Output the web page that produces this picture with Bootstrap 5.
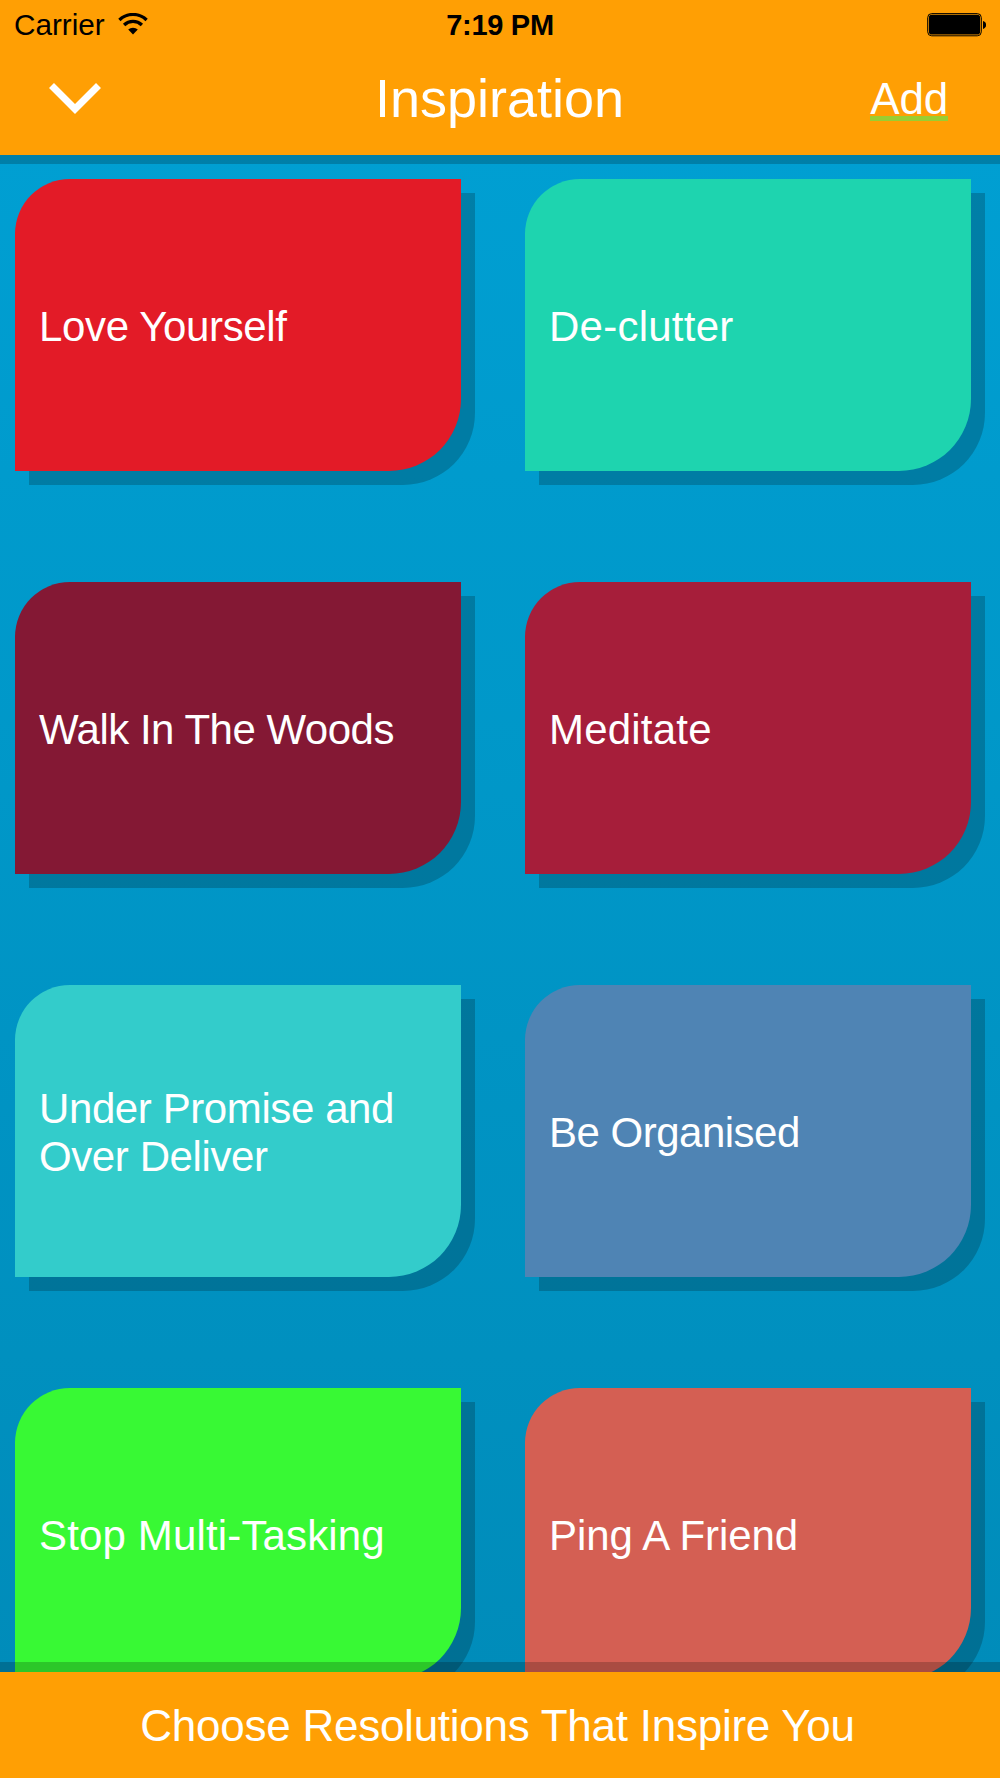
<!DOCTYPE html>
<html lang="en">
<head>
<meta charset="utf-8">
<meta name="viewport" content="width=device-width, initial-scale=1">
<title>Inspiration</title>
<link href="https://cdn.jsdelivr.net/npm/bootstrap@5.3.0/dist/css/bootstrap.min.css" rel="stylesheet">
<style>
  body { font-family: "Liberation Sans", Arial, sans-serif; }
  .app-screen { height: 1778px; background: linear-gradient(#009fd2 155px, #008cba 1672px); }
  .app-header, .app-footer { background: #ff9f04; z-index: 2; }
  .app-header { height: 155px; box-shadow: 0 9px 0 rgba(0,0,0,.2); }
  .app-footer { height: 106px; box-shadow: 0 -10px 0 rgba(0,0,0,.2); font-size: 44px; letter-spacing: -.25px; padding: 2px 5px 0 0; }
  .status-bar { height: 50px; padding: 0 14px; font-size: 29.7px; line-height: 50px; }
  .status-clock { font-size: 29px; letter-spacing: -.3px; }
  .status-icon-wifi { margin: -3px 0 0 -3px; }
  .title-bar { height: 105px; padding: 0 52px 0 48px; }
  .screen-title { font-size: 54px; line-height: 96px; font-weight: 400; padding-left: 3px; }
  .add-link { font-size: 44px; line-height: 34px; height: 39px; letter-spacing: -.2px; border-bottom: 5px solid #9acd32; margin-top: 8px; }
  .idea-list { min-height: 0; padding: 24px 29px 0 15px; }
  .idea-grid { --bs-gutter-x: 64px; --bs-gutter-y: 111px; }
  .idea-tile { height: 292px; padding: 4px 24px 0; border-radius: 55px 0 72px 0; box-shadow: 14px 14px 0 rgba(0,0,0,.2); font-size: 42px; line-height: 48px; letter-spacing: -.4px; }
  .tile-red { background: #e31b27; letter-spacing: -.35px; }
  .tile-mint { background: #1ed4af; letter-spacing: .25px; }
  .tile-wine { background: #841834; letter-spacing: -.5px; }
  .tile-crimson { background: #a61e3a; letter-spacing: .2px; }
  .tile-aqua { background: #33cccb; }
  .tile-steel { background: #4f84b4; letter-spacing: -.5px; }
  .tile-green { background: #38f934; letter-spacing: .15px; }
  .tile-coral { background: #d45f53; letter-spacing: -.05px; }
</style>
</head>
<body>
<div class="app-screen d-flex flex-column overflow-hidden">
  <header class="app-header position-relative flex-shrink-0">
    <div class="status-bar row g-0 text-black">
      <div class="col d-flex align-items-center gap-3">
        <span>Carrier</span>
        <svg class="status-icon-wifi" width="30" height="22" viewBox="0 0 30 22" aria-hidden="true">
          <path d="M1.400 7a19.500 19.500 0 0 1 27.200 0" fill="none" stroke="#000" stroke-width="3.300"/>
          <path d="M6.100 12a12.900 12.900 0 0 1 17.800 0" fill="none" stroke="#000" stroke-width="3.300"/>
          <path d="M10.200 16.600a7 7 0 0 1 9.600 0L15 21.600z"/>
        </svg>
      </div>
      <div class="status-clock col-auto fw-bold">7:19 PM</div>
      <div class="col d-flex align-items-center justify-content-end">
        <svg width="60" height="24" viewBox="0 0 60 24" aria-hidden="true">
          <rect x="1.700" y=".600" width="53.600" height="22.200" rx="4" fill="none" stroke="#000" stroke-width="1"/>
          <rect x="2.900" y="1.800" width="51.200" height="19.800" rx="2.800"/>
          <path d="M57 8c4.300 1.200 4.300 6.800 0 8z"/>
        </svg>
      </div>
    </div>
    <div class="title-bar row g-0 text-white">
      <div class="col pt-4 mt-2">
        <svg class="d-block" width="54" height="34" viewBox="0 0 54 34" aria-hidden="true">
          <path d="M3.500 3.500L27 27 50.500 3.500" fill="none" stroke="#fff" stroke-width="7"/>
        </svg>
      </div>
      <h1 class="screen-title col-auto mb-0">Inspiration</h1>
      <div class="col d-flex justify-content-end align-items-start pt-4">
        <a href="#" class="add-link text-white text-decoration-none">Add</a>
      </div>
    </div>
  </header>
  <main class="idea-list flex-fill">
    <div class="row row-cols-2 idea-grid mt-0">
      <div class="col mt-0"><div class="idea-tile tile-red text-white d-flex align-items-center">Love Yourself</div></div>
      <div class="col mt-0"><div class="idea-tile tile-mint text-white d-flex align-items-center">De-clutter</div></div>
      <div class="col"><div class="idea-tile tile-wine text-white d-flex align-items-center">Walk In The Woods</div></div>
      <div class="col"><div class="idea-tile tile-crimson text-white d-flex align-items-center">Meditate</div></div>
      <div class="col"><div class="idea-tile tile-aqua text-white d-flex align-items-center">Under Promise and Over Deliver</div></div>
      <div class="col"><div class="idea-tile tile-steel text-white d-flex align-items-center">Be Organised</div></div>
      <div class="col"><div class="idea-tile tile-green text-white d-flex align-items-center">Stop Multi-Tasking</div></div>
      <div class="col"><div class="idea-tile tile-coral text-white d-flex align-items-center">Ping A Friend</div></div>
    </div>
  </main>
  <footer class="app-footer position-relative flex-shrink-0 d-flex align-items-center justify-content-center text-white">Choose Resolutions That Inspire You</footer>
</div>
<script src="https://cdn.jsdelivr.net/npm/bootstrap@5.3.0/dist/js/bootstrap.bundle.min.js"></script>
</body>
</html>
